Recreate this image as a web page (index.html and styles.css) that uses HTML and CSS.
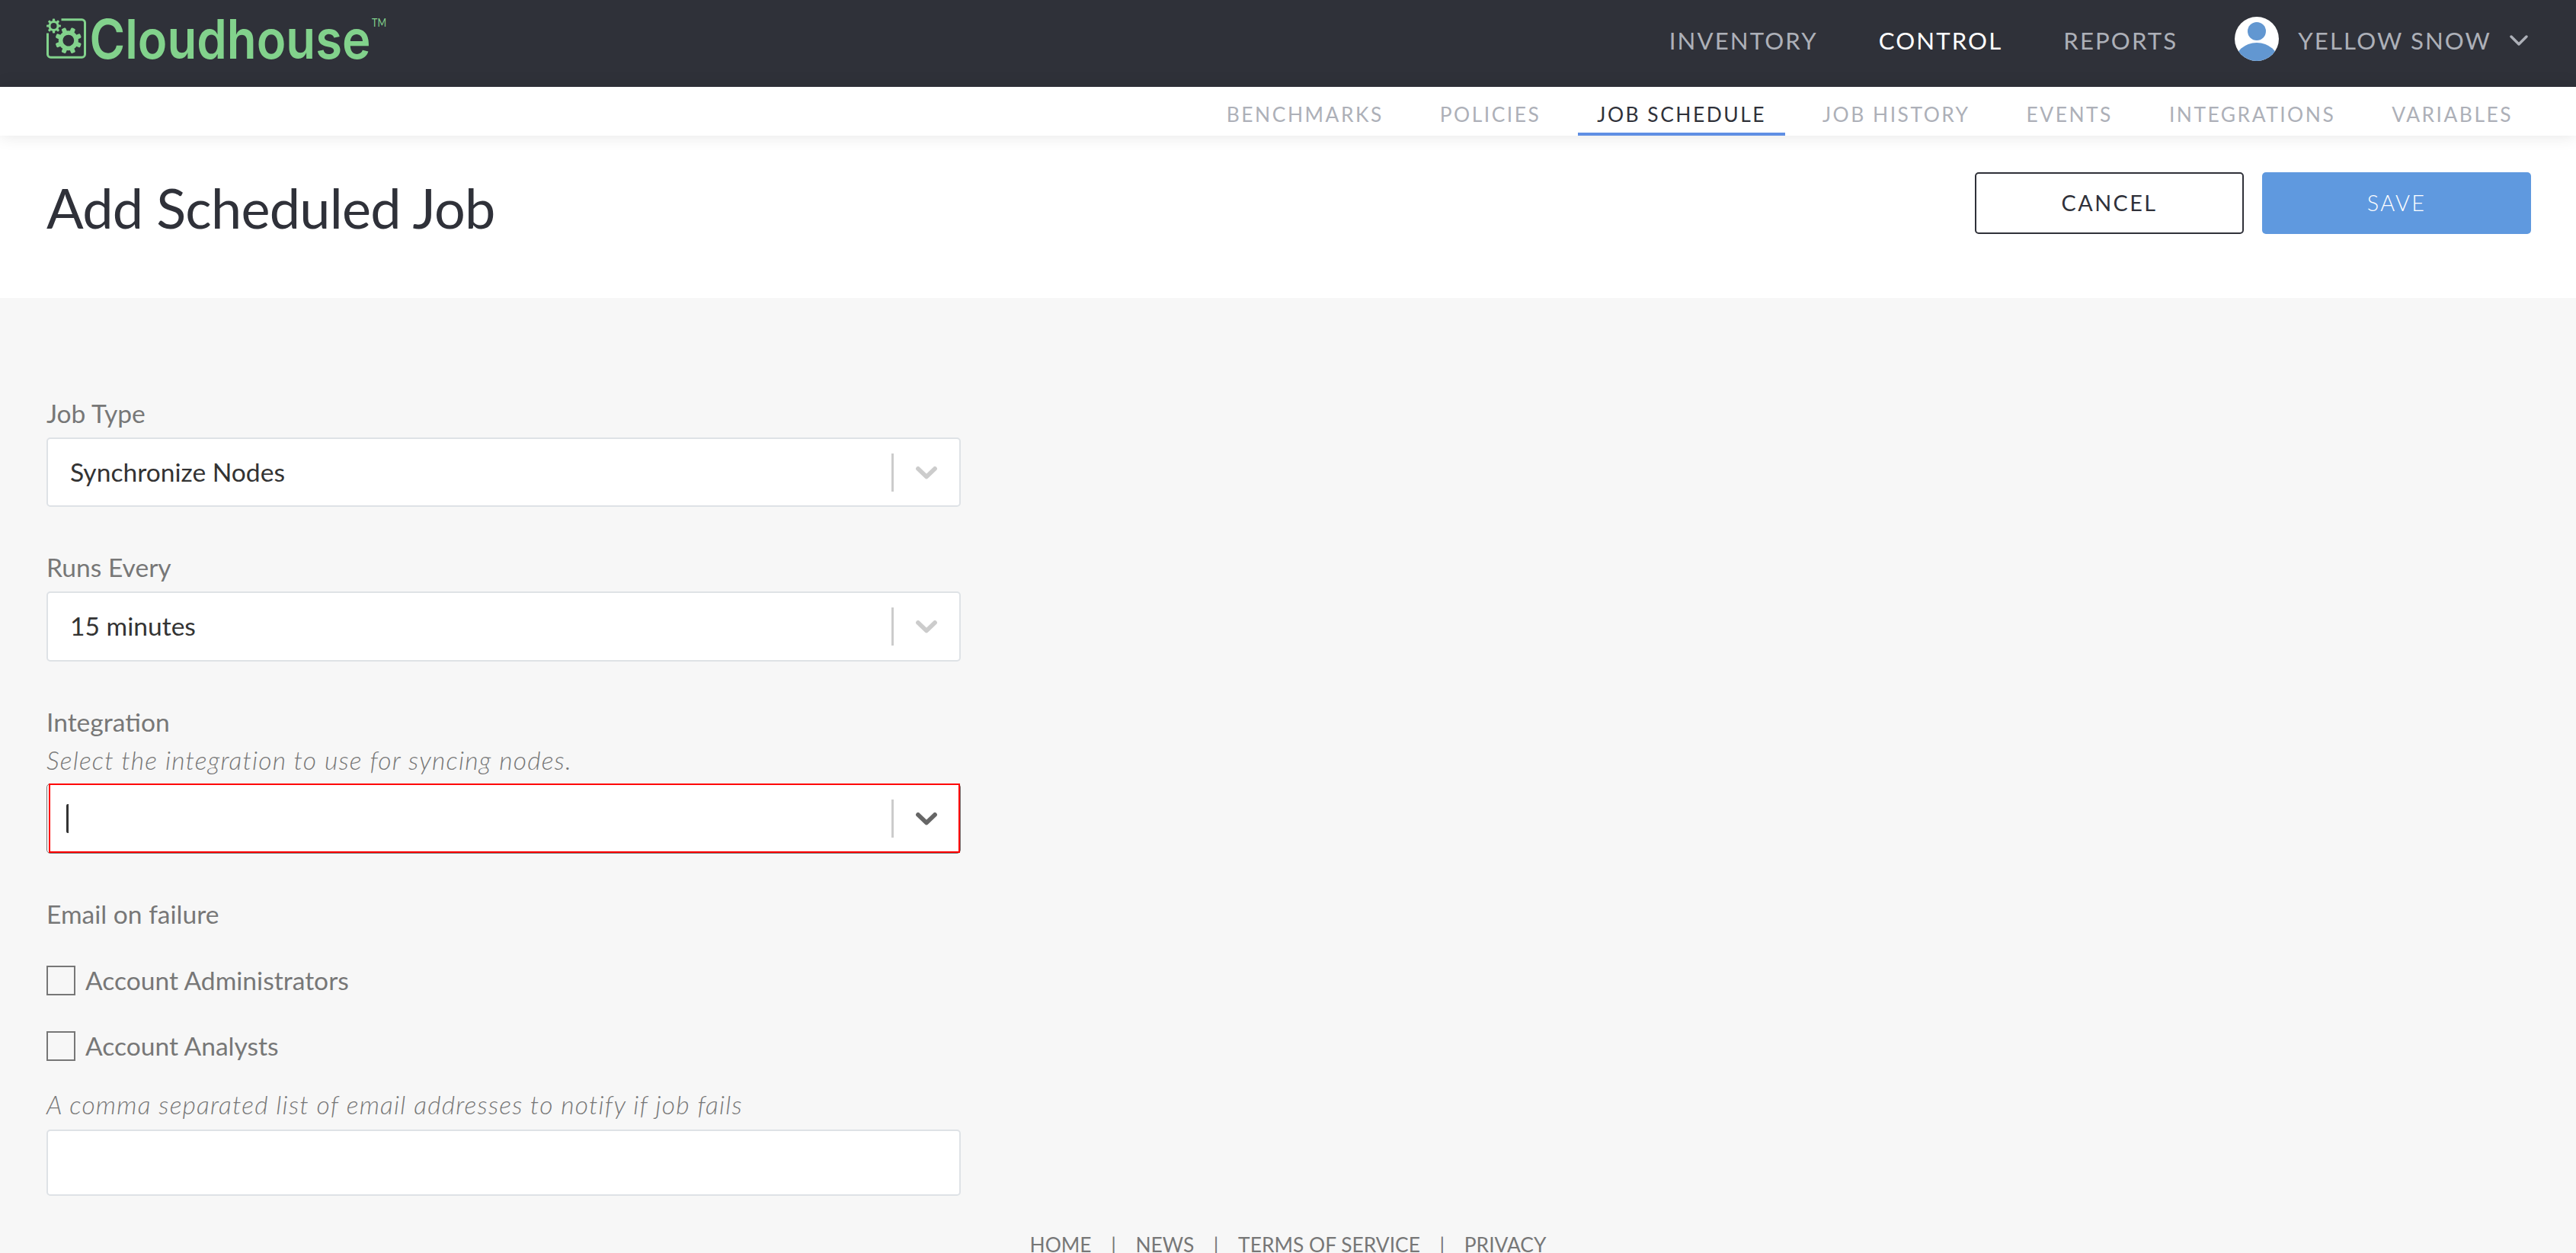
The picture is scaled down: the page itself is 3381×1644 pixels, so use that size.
FILE: index.html
```html
<!DOCTYPE html>
<html lang="en">
<head>
    <meta charset="UTF-8">
    <meta name="viewport" content="width=device-width, initial-scale=1.0">
    <title>Add Scheduled Job</title>
    <link rel="stylesheet" href="styles.css">
</head>

<body>
    <header class="header">
        <svg class="logo" viewBox="61 3 450 100" width="450" height="100">
            <defs>
                <g id="teeth">
                    <rect x="-3" y="-17.4" width="6" height="34.8" rx="1.6"/>
                    <rect x="-17.4" y="-3" width="34.8" height="6" rx="1.6"/>
                </g>
                <mask id="hole">
                    <rect x="-20" y="-20" width="40" height="40" fill="#fff"/>
                    <circle r="7.4" fill="#000"/>
                </mask>
                <g id="gear" mask="url(#hole)">
                    <circle r="13"/>
                    <use href="#teeth"/>
                    <use href="#teeth" transform="rotate(45)"/>
                </g>
            </defs>
            <path class="logo-frame" d="M80.5 25.8H107.5a4 4 0 0 1 4 4V71.2a4 4 0 0 1 -4 4H66.5a4 4 0 0 1 -4 -4V43.5"/>
            <use href="#gear" transform="translate(89.8 53.2) rotate(22.5)"/>
            <use href="#gear" transform="translate(70.5 34) scale(.54)"/>
            <text class="logo-name" x="117.5" y="76.5" textLength="369" lengthAdjust="spacingAndGlyphs">Cloudhouse</text>
            <text class="logo-tm" x="488" y="35" textLength="19" lengthAdjust="spacingAndGlyphs">TM</text>
        </svg>
        <nav class="nav">
            <a class="nav-link">INVENTORY</a>
            <a class="nav-link active">CONTROL</a>
            <a class="nav-link">REPORTS</a>
            <a class="nav-link user">
                <svg class="avatar" viewBox="0 0 58 58" width="58" height="58">
                    <clipPath id="face"><circle cx="29" cy="29" r="29"/></clipPath>
                    <g clip-path="url(#face)">
                        <rect width="58" height="58" fill="#fff"/>
                        <circle cx="29" cy="19" r="12" fill="#6297d1"/>
                        <ellipse cx="29" cy="60" rx="29" ry="26" fill="#6297d1"/>
                    </g>
                </svg>
                <span>YELLOW SNOW</span>
                <svg class="caret" viewBox="0 0 24 14" width="24" height="14"><path d="M2 2L12 12L22 2"/></svg>
            </a>
        </nav>
    </header>

    <nav class="subnav">
        <a class="subnav-link">BENCHMARKS</a>
        <a class="subnav-link">POLICIES</a>
        <a class="subnav-link active">JOB SCHEDULE</a>
        <a class="subnav-link">JOB HISTORY</a>
        <a class="subnav-link">EVENTS</a>
        <a class="subnav-link">INTEGRATIONS</a>
        <a class="subnav-link">VARIABLES</a>
    </nav>

    <div class="page-head">
        <h1>Add Scheduled Job</h1>
        <div class="actions">
            <button class="btn btn-cancel">CANCEL</button>
            <button class="btn btn-save">SAVE</button>
        </div>
    </div>

    <form class="form">
        <div class="group">
            <label>Job Type</label>
            <div class="select">
                <span class="value">Synchronize Nodes</span>
                <span class="separator"></span>
                <svg class="arrow" viewBox="0 0 28 18" width="28" height="18"><path d="M3 3L14 13.5L25 3"/></svg>
            </div>
        </div>
        <div class="group">
            <label>Runs Every</label>
            <div class="select tall">
                <span class="value">15 minutes</span>
                <span class="separator"></span>
                <svg class="arrow" viewBox="0 0 28 18" width="28" height="18"><path d="M3 3L14 13.5L25 3"/></svg>
            </div>
        </div>
        <div class="group">
            <label>Integration</label>
            <p class="help">Select the integration to use for syncing nodes.</p>
            <div class="select tall invalid">
                <span class="value"><span class="cursor"></span></span>
                <span class="separator"></span>
                <svg class="arrow" viewBox="0 0 28 18" width="28" height="18"><path d="M3 3L14 13.5L25 3"/></svg>
            </div>
        </div>
        <div class="group">
            <label>Email on failure</label>
            <div class="checks">
                <div class="check"><span class="box"></span>Account Administrators</div>
                <div class="check"><span class="box"></span>Account Analysts</div>
            </div>
            <p class="help help-emails">A comma separated list of email addresses to notify if job fails</p>
            <input type="text" class="emails">
        </div>
    </form>

    <footer class="footer">
        <a>HOME</a><span>|</span><a>NEWS</a><span>|</span><a>TERMS OF SERVICE</a><span>|</span><a>PRIVACY</a>
    </footer>
</body>
</html>
```
FILE: styles.css
```css
* {
    box-sizing: border-box;
}

body {
    font-family: Lato, sans-serif;
    margin: 0;
    height: 1644px;
    overflow: hidden;
    background-color: #f7f7f7;
    color: #777;
}

.header {
    height: 114px;
    padding: 0 63px 8px 61px;
    display: flex;
    align-items: center;
    justify-content: space-between;
    background-color: #2f3139;
}

.logo {
    fill: #82d28c;
}

.logo-frame {
    fill: none;
    stroke: #82d28c;
    stroke-width: 3;
}

.logo-name {
    font-family: Inter, sans-serif;
    font-size: 71px;
    font-weight: 600;
}

.logo-tm {
    font-size: 15px;
}

.nav {
    display: flex;
    align-items: center;
    gap: 80px;
}

.nav-link {
    font-size: 31.2px;
    letter-spacing: 2.1px;
    color: #adb0b8;
}

.nav-link.active {
    color: #fff;
}

.user {
    display: flex;
    align-items: center;
    margin-left: -5px;
}

.avatar {
    margin: 0 25px 4px 0;
}

.caret {
    margin-left: 24px;
}

.caret path {
    fill: none;
    stroke: #adb0b8;
    stroke-width: 3.4;
    stroke-linecap: round;
    stroke-linejoin: round;
}

.subnav {
    position: relative;
    height: 64px;
    padding-right: 58px;
    display: flex;
    justify-content: flex-end;
    gap: 24px;
    background-color: #fff;
    box-shadow: 0 0 22px rgba(0, 0, 0, 0.11);
}

.subnav-link {
    padding: 20px 25px 0;
    border-bottom: 4px solid transparent;
    font-size: 26.4px;
    line-height: 32px;
    letter-spacing: 2.5px;
    color: #adb0b8;
}

.subnav-link.active {
    color: #2f3139;
    border-bottom-color: #5f8fe4;
}

.page-head {
    height: 213px;
    padding: 48px 59px 0 61px;
    display: flex;
    justify-content: space-between;
    align-items: flex-start;
    background-color: #fff;
}

h1 {
    margin: 2px 0 0;
    font-size: 72px;
    font-weight: 400;
    line-height: 88px;
    letter-spacing: -0.01em;
    color: #2f3139;
}

.actions {
    display: flex;
    gap: 24px;
}

.btn {
    width: 353px;
    height: 81px;
    padding: 0 0 2px;
    border: none;
    border-radius: 5px;
    font-family: inherit;
    font-size: 28.8px;
    letter-spacing: 2.4px;
}

.btn-cancel {
    border: 2.4px solid #2f3139;
    background-color: #fff;
    color: #2f3139;
}

.btn-save {
    background-color: #5f99df;
    color: #fff;
    font-weight: 300;
}

.form {
    width: 1261px;
    padding: 131px 0 0 61px;
    font-size: 33.6px;
    line-height: 40px;
}

.group {
    margin-bottom: 59px;
}

label {
    display: block;
    margin-bottom: 12px;
}

.select {
    position: relative;
    height: 91px;
    display: flex;
    align-items: center;
    padding: 0 29px 0 29px;
    border: 2px solid #dee2e6;
    border-radius: 5px;
    background-color: #fff;
    color: #333;
}

.select.tall {
    height: 92px;
}

.value {
    flex: 1;
    padding-bottom: 2px;
}

.separator {
    width: 3px;
    height: 50px;
    margin-right: 29px;
    background-color: #ccc;
}

.arrow {
    margin-top: 2px;
}

.arrow path {
    fill: none;
    stroke: #ccc;
    stroke-width: 5.8;
    stroke-linecap: round;
    stroke-linejoin: round;
}

.select.invalid {
    border: 1px solid #777;
    padding: 0 30px 0 25px;
}

/* red error frame drawn over the control */
.select.invalid::after {
    content: "";
    position: absolute;
    top: -1px;
    right: 0;
    bottom: 0;
    left: 2px;
    border: 2px solid #f00;
}

.invalid .value {
    padding-bottom: 0;
}

.invalid .arrow path {
    stroke: #666;
}

.cursor {
    display: block;
    width: 3px;
    height: 38px;
    border-radius: 2px 0 0 2px;
    background-color: #333;
}

.help {
    margin: -2px 0 11px;
    font-size: 33.6px;
    font-style: italic;
    font-weight: 300;
    letter-spacing: 1.2px;
}

.checks {
    padding-top: 35px;
}

.check {
    display: flex;
    align-items: center;
    gap: 13px;
    height: 40px;
}

.check + .check {
    margin-top: 46px;
}

.box {
    width: 38px;
    height: 39px;
    border: 2.4px solid #777;
}

.help-emails {
    margin: 37px 0 13px;
}

.emails {
    display: block;
    width: 100%;
    height: 87px;
    border: 2px solid #dee2e6;
    border-radius: 5px;
    background-color: #fff;
}

.footer {
    display: flex;
    justify-content: center;
    gap: 25.6px;
    margin-top: -11px;
    font-size: 26.4px;
    line-height: 32px;
}
```
